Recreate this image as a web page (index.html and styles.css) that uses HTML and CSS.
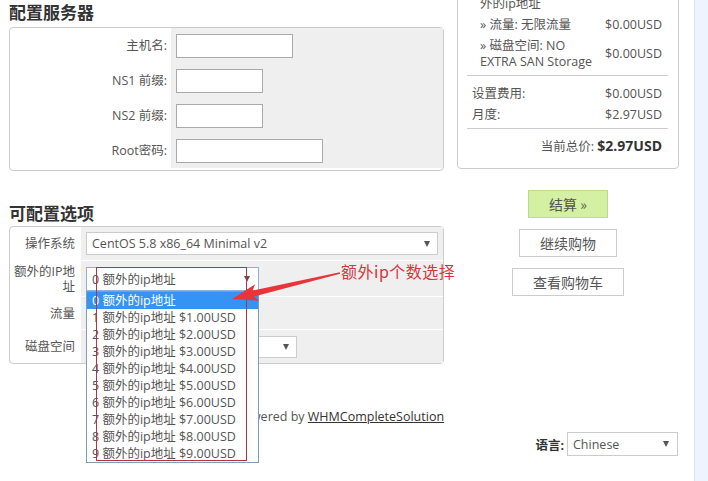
FILE: index.html
```html
<!DOCTYPE html>
<html lang="zh-CN">
<head>
<meta charset="utf-8">
<title>配置服务器</title>
<link rel="stylesheet" href="styles.css">
</head>
<body>
<div class="page">
  <div class="main">
    <div class="columns">
      <div class="left">
        <h2 class="heading">配置服务器</h2>
        <div class="box server-box">
          <div class="frow"><div class="flabel">主机名:</div><div class="ffield"><input class="input w-host" type="text"></div></div>
          <div class="frow"><div class="flabel">NS1 前缀:</div><div class="ffield"><input class="input w-ns" type="text"></div></div>
          <div class="frow"><div class="flabel">NS2 前缀:</div><div class="ffield"><input class="input w-ns" type="text"></div></div>
          <div class="frow"><div class="flabel">Root密码:</div><div class="ffield"><input class="input w-root" type="password"></div></div>
        </div>

        <h2 class="heading heading-2">可配置选项</h2>
        <div class="box options-box">
          <div class="orow row-os">
            <div class="olabel">操作系统</div>
            <div class="ofield"><div class="select sel-os"><span>CentOS 5.8 x86_64 Minimal v2</span><i class="caret"></i></div></div>
          </div>
          <div class="orow row-ip">
            <div class="olabel">额外的IP地址</div>
            <div class="ofield">
              <div class="select-wrap">
                <div class="select sel-ip"><span>0 额外的ip地址</span><i class="caret"></i></div>
                <ul class="dropdown">
                  <li class="opt selected">0 额外的ip地址</li>
                  <li class="opt">1 额外的ip地址 $1.00USD</li>
                  <li class="opt">2 额外的ip地址 $2.00USD</li>
                  <li class="opt">3 额外的ip地址 $3.00USD</li>
                  <li class="opt">4 额外的ip地址 $4.00USD</li>
                  <li class="opt">5 额外的ip地址 $5.00USD</li>
                  <li class="opt">6 额外的ip地址 $6.00USD</li>
                  <li class="opt">7 额外的ip地址 $7.00USD</li>
                  <li class="opt">8 额外的ip地址 $8.00USD</li>
                  <li class="opt">9 额外的ip地址 $9.00USD</li>
                </ul>
              </div>
            </div>
          </div>
          <div class="orow row-traffic">
            <div class="olabel">流量</div>
            <div class="ofield"><div class="select sel-traffic"><span>无限流量</span><i class="caret"></i></div></div>
          </div>
          <div class="orow row-disk">
            <div class="olabel">磁盘空间</div>
            <div class="ofield"><div class="select sel-disk"><span>NO EXTRA SAN Storage</span><i class="caret"></i></div></div>
          </div>
        </div>
      </div>

      <div class="right">
        <div class="summary">
          <div class="sitem"><div class="sname">» 额外的IP地址: 0 额<br>外的ip地址</div></div>
          <div class="sitem"><div class="sname">» 流量: 无限流量</div><div class="sprice">$0.00USD</div></div>
          <div class="sitem"><div class="sname">» 磁盘空间: NO<br>EXTRA SAN Storage</div><div class="sprice">$0.00USD</div></div>
          <hr class="sep">
          <div class="srow"><span>设置费用:</span><span>$0.00USD</span></div>
          <div class="srow"><span>月度:</span><span>$2.97USD</span></div>
          <hr class="sep sep-2">
          <div class="stotal">当前总价: <b>$2.97USD</b></div>
        </div>
        <div class="actions">
          <button class="btn btn-checkout" type="button">结算 »</button>
          <button class="btn" type="button">继续购物</button>
          <button class="btn" type="button">查看购物车</button>
        </div>
      </div>
    </div>

    <div class="footer">Powered by <a href="#">WHMCompleteSolution</a></div>
    <div class="lang">
      <span class="lang-label">语言:</span>
      <div class="select sel-lang"><span>Chinese</span><i class="caret"></i></div>
    </div>
  </div>
  <div class="strip"></div>
</div>

<svg class="annot" width="708" height="481" viewBox="0 0 708 481" aria-hidden="true">
  <rect x="96.5" y="267.5" width="150" height="193" fill="none" stroke="#b8323e" stroke-width="1"/>
  <polygon points="232,299 255.1,284.3 252.6,290.6 339.8,272.3 340.2,273.7 254,296.4 259.3,300.7" fill="#e9343b"/>
</svg>
<div class="annot-text">额外ip个数选择</div>
</body>
</html>
```

FILE: styles.css
```css
* { box-sizing: border-box; }

html, body { margin: 0; padding: 0; }

body {
  font-family: "Open Sans", "Noto Sans CJK SC", sans-serif;
  font-size: 12.5px;
  color: #555;
  background: #fff;
  width: 708px;
  height: 481px;
  overflow: hidden;
  position: relative;
}

.page { display: flex; height: 481px; }

.main { width: 694px; padding: 0 15px 0 9px; }

.strip {
  flex: 1;
  background: #edf4fd;
  border-left: 1px solid #d6e3f3;
}

.columns { display: flex; align-items: flex-start; }

.left { width: 435px; }

.right { width: 222px; margin-left: 13px; margin-top: -30px; }

.heading {
  margin: 0 0 3px;
  font-family: "Noto Sans CJK SC", sans-serif;
  font-size: 17px;
  line-height: 24px;
  font-weight: 700;
  color: #333;
}

.heading-2 { margin: 30px 0 1px; }

.box {
  border: 1px solid #ccc;
  border-radius: 4px;
  background: #fff;
}

/* server box */
.server-box { padding-bottom: 2px; }

.frow {
  display: grid;
  grid-template-columns: 161px 1fr;
  height: 34px;
  margin-bottom: 1px;
}

.flabel {
  text-align: right;
  padding-right: 4px;
  line-height: 35px;
  color: #555;
}

.ffield { background: #efefef; padding: 6px 0 0 5px; }

.input {
  display: block;
  height: 24px;
  margin: 0;
  padding: 0 4px;
  border: 1px solid #aaa;
  background: #fff;
  font: inherit;
}

.w-host { width: 117px; }
.w-ns { width: 87px; }
.w-root { width: 147px; }

/* options box */
.orow {
  display: grid;
  grid-template-columns: 71px 1fr;
  margin-bottom: 1px;
}

.orow:last-child { margin-bottom: 0; }

.row-os { height: 33px; }
.row-ip { height: 35px; }
.row-traffic { height: 32px; }
.row-disk { height: 33px; }

.olabel {
  display: flex;
  align-items: center;
  justify-content: flex-end;
  text-align: right;
  padding-right: 6px;
  line-height: 15px;
  color: #555;
}

.ofield {
  display: flex;
  align-items: center;
  background: #efefef;
  padding-left: 5px;
}

.select {
  display: flex;
  align-items: center;
  justify-content: space-between;
  background: #fff;
  border: 1px solid #ccc;
  padding: 0 7px 0 5px;
  white-space: nowrap;
  overflow: hidden;
  color: #555;
}

.caret {
  flex: none;
  width: 0;
  height: 0;
  border-left: 3px solid transparent;
  border-right: 3px solid transparent;
  border-top: 6px solid #555;
  margin-left: 6px;
}

.sel-os { width: 352px; height: 23px; }

.select-wrap { position: relative; }

.sel-ip {
  width: 173px;
  height: 24px;
  border-color: #8fb0d8;
  padding-right: 8px;
}

.sel-traffic { width: 150px; height: 22px; }
.sel-disk { width: 211px; height: 22px; }

.dropdown {
  position: absolute;
  top: 100%;
  left: 0;
  z-index: 5;
  width: 173px;
  margin: 0;
  padding: 0;
  list-style: none;
  background: #fff;
  border: 1px solid #7f9db9;
}

.opt {
  height: 17px;
  line-height: 17px;
  padding-left: 5px;
  white-space: nowrap;
  color: #555;
}

.opt.selected { background: #3394f5; color: #fff; }

/* summary panel */
.summary {
  border: 1px solid #ccc;
  border-radius: 4px;
  padding: 9px 16px 12px 14px;
}

.sitem {
  display: flex;
  justify-content: space-between;
  align-items: center;
  line-height: 16px;
  margin-bottom: 5px;
  padding-left: 8px;
}

.sep {
  border: 0;
  border-top: 1px solid #ccc;
  height: 0;
  margin: 4px -6px 10px -5px;
}

.sep-2 { margin-top: 4px; margin-bottom: 8px; }

.srow {
  display: flex;
  justify-content: space-between;
  line-height: 16px;
  margin-bottom: 5px;
}

.stotal { text-align: right; line-height: 18px; }

.stotal b { font-size: 14px; color: #333; }

.actions {
  display: flex;
  flex-direction: column;
  align-items: center;
  gap: 11px;
  margin-top: 21px;
}

.btn {
  display: flex;
  align-items: center;
  justify-content: center;
  height: 28px;
  margin: 0;
  padding: 0 20px;
  border: 1px solid #ccc;
  border-radius: 0;
  background: #fff;
  font-family: "Noto Sans CJK SC", "Open Sans", sans-serif;
  font-size: 14px;
  color: #555;
}

.btn-checkout {
  width: 80px;
  padding: 0;
  background: #d4f0a2;
  border-color: #bcd98e;
}

/* footer */
.footer {
  margin-top: 44px;
  padding-right: 8px;
  line-height: 18px;
  text-align: center;
  color: #555;
}

.footer a { color: #333; text-decoration: underline; }

.lang {
  display: flex;
  justify-content: flex-end;
  align-items: center;
  margin-top: 6px;
  margin-right: 1px;
}

.lang-label { font-weight: 700; color: #333; margin-right: 3px; }

.sel-lang { width: 111px; height: 24px; padding-right: 8px; }

/* annotation overlay */
.annot {
  position: absolute;
  top: 0;
  left: 0;
  z-index: 10;
  pointer-events: none;
}

.annot-text {
  position: absolute;
  left: 341px;
  top: 261px;
  z-index: 10;
  font-family: "Noto Sans CJK SC", sans-serif;
  font-size: 16px;
  line-height: 20px;
  color: #d4363e;
  letter-spacing: 0.5px;
}
```
